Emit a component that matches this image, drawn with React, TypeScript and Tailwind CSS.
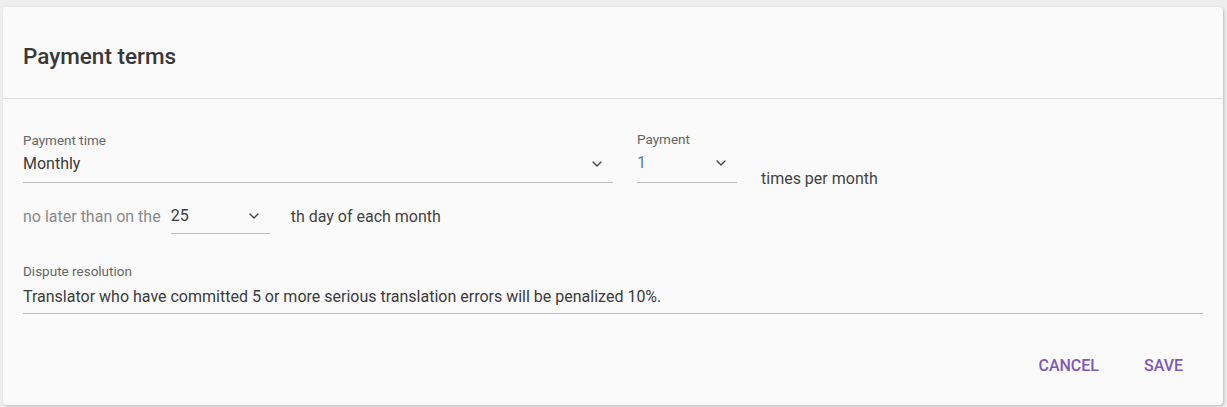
import React from "react";
import { ChevronDown } from "lucide-react";

export default function App() {
  return (
    <div className="min-h-[407px] bg-[#eeeeee] pt-[7px] pl-[3px] font-['Roboto',sans-serif]">
      <div className="w-[1220px] h-[398px] bg-[#fafafa] rounded-[4px] shadow-[1px_1px_3px_rgba(0,0,0,0.22)] flex flex-col">
        <div className="h-[92px] pt-[33px] px-5 border-b border-[#dedede]">
          <h2 className="text-[22.5px] leading-8 font-medium text-[#383838]">Payment terms</h2>
        </div>

        <div className="px-5 pt-[32px] flex flex-col">
          {/* row 1 */}
          <div className="flex items-end gap-6">
            <div className="w-[590px] flex flex-col">
              <label className="text-[13.5px] leading-4 text-[#666]">Payment time</label>
              <div className="mt-1 pb-[6px] flex items-center justify-between border-b border-[#bdbdbd] pr-2">
                <span className="text-[16px] leading-6 text-[#3b3b3b]">Monthly</span>
                <ChevronDown className="w-4 h-4 text-[#444]" strokeWidth={2} />
              </div>
            </div>
            <div className="w-[100px] flex flex-col">
              <label className="text-[13.5px] leading-4 text-[#666]">Payment</label>
              <div className="mt-1 pb-[7px] flex items-center justify-between border-b border-[#bdbdbd] pr-2">
                <span className="text-[16px] leading-6 text-[#5a78b4]">1</span>
                <ChevronDown className="w-4 h-4 text-[#444]" strokeWidth={2} />
              </div>
            </div>
            <span className="text-[16px] leading-6 text-[#424242] -mb-[8px]">times per month</span>
          </div>

          {/* row 2 */}
          <div className="mt-[21px] flex items-center">
            <span className="text-[16px] leading-6 text-[#8a8a8a] -mt-[5px]">no later than on the</span>
            <div className="ml-[10px] pb-[5px] w-[99px] flex items-center justify-between border-b border-[#bdbdbd] pr-2">
              <span className="text-[16px] leading-6 text-[#3b3b3b]">25</span>
              <ChevronDown className="w-4 h-4 text-[#444]" strokeWidth={2} />
            </div>
            <span className="ml-[21px] text-[16px] leading-6 text-[#424242] -mt-[5px]">th day of each month</span>
          </div>

          {/* row 3 */}
          <div className="mt-[29px] w-[1180px] flex flex-col">
            <label className="text-[13.5px] leading-4 text-[#666]">Dispute resolution</label>
            <div className="mt-[6px] pb-1 border-b border-[#bdbdbd]">
              <span className="text-[16px] leading-6 text-[#3b3b3b]">
                Translator who have committed 5 or more serious translation errors will be penalized 10%.
              </span>
            </div>
          </div>
        </div>

        <div className="mt-[34px] pr-6 flex justify-end gap-[13px]">
          <button className="h-9 px-4 text-[16px] font-medium uppercase text-[#7e57c2] rounded">Cancel</button>
          <button className="h-9 px-4 text-[16px] font-medium uppercase text-[#7e57c2] rounded">Save</button>
        </div>
      </div>
    </div>
  );
}
